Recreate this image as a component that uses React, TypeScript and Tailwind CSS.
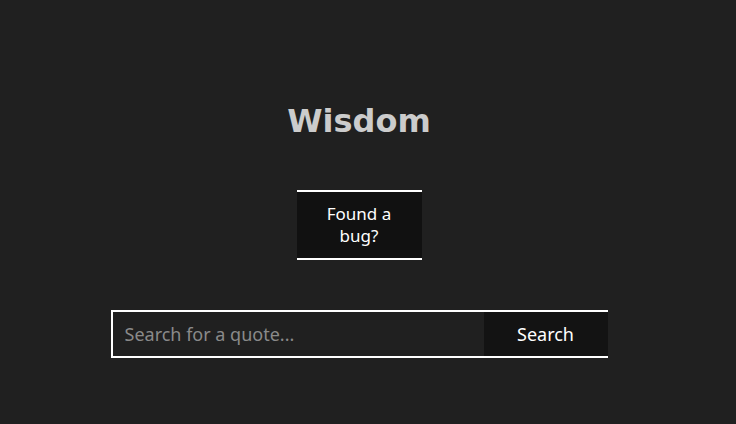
export default function App() {
  return (
    <div className="min-h-[424px] w-full bg-[#202020]">
      <div className="flex w-[718px] flex-col items-center pt-[101px]">
        <h1 className="text-[32px] font-bold leading-[40px] text-[#cccccc] [font-family:'DejaVu_Sans',sans-serif]">
          Wisdom
        </h1>
        <button className="mt-[49px] h-[70px] w-[125px] border-y-2 border-white bg-[#111111] px-6 text-[17px] leading-[22px] text-white [font-family:'Noto_Sans',sans-serif]">
          Found a bug?
        </button>
        <form className="mt-[50px] flex h-[48px] w-[497px]">
          <input
            className="h-full w-[373px] border-y-2 border-l-2 border-white bg-[#202020] px-3 text-lg text-white outline-none placeholder:text-[#8a8a8a] [font-family:'Noto_Sans',sans-serif]"
            placeholder="Search for a quote..."
          />
          <button
            type="button"
            className="h-full w-[124px] border-y-2 border-white bg-[#131313] text-lg text-white [font-family:'Noto_Sans',sans-serif]"
          >
            Search
          </button>
        </form>
      </div>
    </div>
  )
}
